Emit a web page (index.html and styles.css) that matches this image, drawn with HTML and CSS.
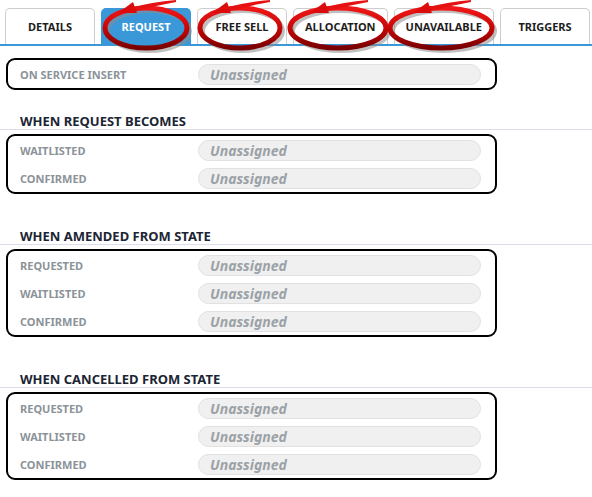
FILE: index.html
```html
<!DOCTYPE html>
<html>
<head>
<meta charset="utf-8">
<link rel="stylesheet" href="styles.css">
</head>
<body>
<div class="page">
  <nav class="tabbar">
    <div class="tab">DETAILS</div>
    <div class="tab active">REQUEST</div>
    <div class="tab">FREE SELL</div>
    <div class="tab">ALLOCATION</div>
    <div class="tab">UNAVAILABLE</div>
    <div class="tab">TRIGGERS</div>
  </nav>

  <div class="box first">
    <div class="row"><span class="label">ON SERVICE INSERT</span><span class="pill">Unassigned</span></div>
  </div>

  <section class="section s-first">
    <h2 class="heading">WHEN REQUEST BECOMES</h2>
    <div class="box">
      <div class="row"><span class="label">WAITLISTED</span><span class="pill">Unassigned</span></div>
      <div class="row"><span class="label">CONFIRMED</span><span class="pill">Unassigned</span></div>
    </div>
  </section>

  <section class="section">
    <h2 class="heading">WHEN AMENDED FROM STATE</h2>
    <div class="box">
      <div class="row"><span class="label">REQUESTED</span><span class="pill">Unassigned</span></div>
      <div class="row"><span class="label">WAITLISTED</span><span class="pill">Unassigned</span></div>
      <div class="row"><span class="label">CONFIRMED</span><span class="pill">Unassigned</span></div>
    </div>
  </section>

  <section class="section">
    <h2 class="heading">WHEN CANCELLED FROM STATE</h2>
    <div class="box">
      <div class="row"><span class="label">REQUESTED</span><span class="pill">Unassigned</span></div>
      <div class="row"><span class="label">WAITLISTED</span><span class="pill">Unassigned</span></div>
      <div class="row"><span class="label">CONFIRMED</span><span class="pill">Unassigned</span></div>
    </div>
  </section>

  <svg class="marks" width="592" height="60" viewBox="0 0 592 60" aria-hidden="true">
    <defs>
      <linearGradient id="red" x1="0" y1="0" x2="0" y2="1">
        <stop offset="0" stop-color="#f01818"/>
        <stop offset="0.5" stop-color="#c80606"/>
        <stop offset="1" stop-color="#7a0000"/>
      </linearGradient>
      <g id="arrow">
        <path d="M-16 -20 Q6 -26 30 -28 L30 -26 Q7 -22 -14 -16 Z" fill="#e41212"/>
        <path d="M-28 -15 L-13 -26 L-9 -15 Z" fill="#dc0c0c"/>
      </g>
    </defs>
    <g transform="translate(146 28)">
      <ellipse rx="41" ry="20" fill="none" stroke="#8c8c8c" stroke-opacity="0.55" stroke-width="4" transform="translate(3 3)"/>
      <ellipse rx="41" ry="20" fill="none" stroke="url(#red)" stroke-width="5"/>
      <use href="#arrow"/>
    </g>
    <g transform="translate(240 28)">
      <ellipse rx="40" ry="20" fill="none" stroke="#8c8c8c" stroke-opacity="0.55" stroke-width="4" transform="translate(3 3)"/>
      <ellipse rx="40" ry="20" fill="none" stroke="url(#red)" stroke-width="5"/>
      <use href="#arrow"/>
    </g>
    <g transform="translate(338 28)">
      <ellipse rx="48" ry="20" fill="none" stroke="#8c8c8c" stroke-opacity="0.55" stroke-width="4" transform="translate(3 3)"/>
      <ellipse rx="48" ry="20" fill="none" stroke="url(#red)" stroke-width="5"/>
      <use href="#arrow"/>
    </g>
    <g transform="translate(441 28)">
      <ellipse rx="51" ry="20" fill="none" stroke="#8c8c8c" stroke-opacity="0.55" stroke-width="4" transform="translate(3 3)"/>
      <ellipse rx="51" ry="20" fill="none" stroke="url(#red)" stroke-width="5"/>
      <use href="#arrow"/>
    </g>
  </svg>
</div>
</body>
</html>
```

FILE: styles.css
```css
* { box-sizing: border-box; }
html, body { margin: 0; padding: 0; background: #ffffff; }
body { font-family: "Noto Sans", "Open Sans", sans-serif; }
.page { position: relative; width: 592px; height: 497px; overflow: hidden; }

.tabbar {
  display: flex;
  gap: 6px;
  padding: 8px 0 0 5px;
  border-bottom: 2px solid #3b98d8;
}
.tab {
  min-width: 90px;
  height: 36px;
  padding: 0 11px;
  display: flex;
  align-items: center;
  justify-content: center;
  border: 1px solid #cdcdcd;
  border-bottom: none;
  border-radius: 5px 5px 0 0;
  background: #ffffff;
  color: #1d1d1d;
  font-size: 11px;
  font-weight: 700;
  white-space: nowrap;
}
.tab.active {
  background: #3b98d8;
  border-color: #3b98d8;
  color: #ffffff;
}

.box {
  width: 491px;
  margin-left: 6px;
  border: 2px solid #000000;
  border-radius: 9px;
  padding: 0 14px 0 12px;
}
.box.first { margin-top: 12px; }

.row {
  display: flex;
  align-items: center;
  height: 28px;
}
.label {
  width: 178px;
  flex: none;
  font-size: 11px;
  font-weight: 700;
  color: #8b9399;
}
.pill {
  width: 283px;
  height: 21px;
  flex: none;
  border: 1px solid #e1e1e1;
  border-radius: 11px;
  background: #f0f0f0;
  padding-left: 11px;
  font-size: 14px;
  line-height: 19px;
  font-weight: 700;
  font-style: italic;
  color: #9ba2a7;
}

.section { margin-top: 34px; }
.section.s-first { margin-top: 23px; }
.heading {
  margin: 0 0 4px 0;
  padding-left: 20px;
  height: 17px;
  font-size: 13px;
  line-height: 16px;
  font-weight: 700;
  color: #1c2534;
  border-bottom: 1px solid #dcdcec;
}

.marks {
  position: absolute;
  left: 0;
  top: 0;
  pointer-events: none;
}
```
